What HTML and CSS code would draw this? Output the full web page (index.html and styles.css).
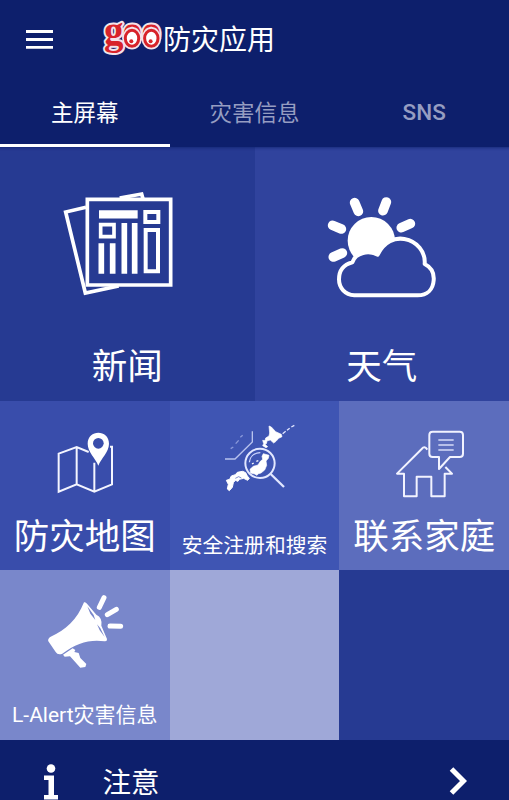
FILE: index.html
```html
<!DOCTYPE html>
<html lang="zh-CN">
<head>
<meta charset="utf-8">
<title>goo防灾应用</title>
<link rel="stylesheet" href="styles.css">
</head>
<body>
<header class="bar">
  <svg class="menu" viewBox="0 0 27 19"><path d="M0 1.5H27M0 9.5H27M0 17.3H27" stroke="#fff" stroke-width="2.8"/></svg>
  <svg class="logo" viewBox="0 0 70 44">
    <text x="6 24.5 43.5" y="27.5">goo</text>
    <g class="halo"><ellipse cx="34" cy="22.3" rx="9.8" ry="11.2"/><ellipse cx="53.3" cy="22.3" rx="9.8" ry="11.2"/></g>
    <g class="eye"><ellipse cx="34" cy="22.3" rx="6.7" ry="8"/><ellipse cx="53.3" cy="22.3" rx="6.7" ry="8"/></g>
    <circle cx="33.3" cy="25.2" r="2" fill="#d8232a"/><circle cx="52.6" cy="25.2" r="2" fill="#d8232a"/>
  </svg>
  <h1>防灾应用</h1>
</header>
<nav class="tabs">
  <a class="tab active">主屏幕</a><a class="tab">灾害信息</a><a class="tab">SNS</a>
</nav>
<main class="grid">
  <section class="tile large news">
    <svg viewBox="0 0 420 390" width="140" height="130" fill="none" stroke="#fff" stroke-width="11">
      <path d="M108 82L47 96L106 339L206 318M209 54L275 42L279 56"/>
      <path d="M112 58H362V315H112Z"/>
      <path d="M147 103H263" stroke-width="25"/>
      <path d="M152 134H192V170H152Z"/>
      <path d="M154 190V281M188 190V281M223 129V281M254 129V281" stroke-width="17"/>
      <path d="M286 96H325V126H286ZM287 150H324V274H287Z" stroke-width="12"/>
    </svg>
    <span class="label">新闻</span>
  </section>
  <section class="tile large weather">
    <svg viewBox="0 0 420 390" width="140" height="130">
      <circle cx="184" cy="182" r="71" fill="#fff"/>
      <path d="M134 68L145 94M229 66L219 92M68 136L94 147M274 143L301 131M70 231L97 219" stroke="#fff" stroke-width="29" stroke-linecap="round"/>
      <path d="M133 346C105 344 87 324 87 298C87 270 103 253 127 247C137 216 177 211 203 224C222 184 255 172 283 177C321 184 347 215 344 252C364 262 373 278 371 301C369 329 351 346 323 346Z" fill="#30439d" stroke="#fff" stroke-width="12" stroke-linejoin="round"/>
    </svg>
    <span class="label">天气</span>
  </section>
  <section class="tile map">
    <svg viewBox="0 0 270 240" width="90" height="80" fill="none" stroke="#f4f5ff" stroke-width="6">
      <path d="M146 96L110 81L56 101V215L110 193L163 215L216 193V80H210M110 81V193M163 128V215"/>
      <path d="M175 137C167 115 143 96 143 71C143 27 207 27 207 71C207 96 183 115 175 137Z" fill="#fff" stroke="none"/>
      <circle cx="175" cy="70" r="16" fill="#394dab" stroke="none"/>
    </svg>
    <span class="label">防灾地图</span>
  </section>
  <section class="tile search">
    <svg viewBox="0 0 300 255" width="100" height="85" fill="#fff">
      <path d="M45 132H75L127 81V49" fill="none" stroke="#b9c3ee" stroke-width="4"/>
      <path d="M62 101L70 96M77 86L86 76M91 67L98 61" fill="none" stroke="#8b99da" stroke-width="4"/>
      <path d="M177 33L184 36L197 50L214 58L216 65L206 70L198 79L191 84L181 75L172 77L170 81L165 77L167 69L177 63L179 54ZM158 76L166 77L171 84L165 88L173 95L168 98L158 92L161 86Z" stroke="#fff" stroke-width="2"/>
      <path d="M218 56L227 49M231 46L239 40M244 36L253 31" stroke="#e0e5ff" stroke-width="4"/>
      <path d="M160 116L177 121L175 130L168 138L170 151L164 165L153 174L145 176L141 181L134 177L122 174L120 163L130 154L144 150L151 139L158 133L156 124Z" stroke="#fff" stroke-width="2"/>
      <path d="M126 147L131 144M139 139L145 137" stroke="#fff" stroke-width="4"/>
      <path d="M49 196L59 193L64 183L76 179L82 172L98 169L107 173L112 183L118 190L113 196L101 190L88 193L84 199L76 196L70 203L67 217L58 227L52 222L55 208Z" stroke="#fff" stroke-width="3"/>
      <path d="M76 190L86 185L94 189" fill="none" stroke="#3f55b3" stroke-width="2"/>
      <circle cx="150" cy="145" r="44" fill="none" stroke="#e2e7ff" stroke-width="6"/>
      <path d="M118 142C119 126 131 114 151 113" fill="none" stroke="#d0d8ff" stroke-width="4"/>
      <path d="M182 177L222 216" stroke="#e2e7ff" stroke-width="7"/>
    </svg>
    <span class="label small">安全注册和搜索</span>
  </section>
  <section class="tile family">
    <svg viewBox="0 0 270 255" width="90" height="85" fill="none" stroke="#f2f3ff" stroke-width="6" stroke-linejoin="round">
      <path d="M127 89C121 80 116 80 110 87L36 161H57V229H95V170H139V229H179V161H201L181 141"/>
      <path d="M143 35H224Q234 35 234 45V101Q234 111 224 111H195L162 147V111H143Q133 111 133 101V45Q133 35 143 35Z"/>
      <path d="M160 60H206M160 75H206M160 90H206" stroke="#d5daf7" stroke-width="5"/>
    </svg>
    <span class="label">联系家庭</span>
  </section>
  <section class="tile alert">
    <svg viewBox="0 0 300 285" width="100" height="95" fill="#fff">
      <path d="M147 67Q152 65 156 71L184 104Q203 113 199 137L216 177Q217 185 209 184C164 177 124 190 82 221Q68 226 62 216L40 184Q37 176 47 170C91 151 127 118 147 67Z"/>
      <path d="M157 79L176 105L181 120L166 101ZM186 133L196 145L209 171L194 151Z" fill="#7987cb"/>
      <path d="M84 224L113 205L121 210L118 216L131 219L136 234L154 252L151 261L136 263L105 229L89 230Z"/>
      <path d="M193 82L207 53M217 104L244 88M225 138L257 139" stroke="#fff" stroke-width="15" stroke-linecap="round"/>
    </svg>
    <span class="label small latin">L-Alert灾害信息</span>
  </section>
  <section class="tile blank"></section>
  <section class="tile dark"></section>
</main>
<footer class="notice">
  <svg class="info" viewBox="0 0 14 36" fill="#fff"><circle cx="7" cy="4.5" r="4.3"/><path d="M0 11.5H10V31H14V35.5H0V31H4.5V16H0Z"/></svg>
  <span>注意</span>
  <svg class="chevron" viewBox="0 0 18 28"><path d="M2.5 2L14.5 14L2.5 26" fill="none" stroke="#fff" stroke-width="5"/></svg>
</footer>
</body>
</html>
```
FILE: styles.css
```css
* { box-sizing: border-box; }
body {
  margin: 0;
  width: 509px;
  height: 800px;
  overflow: hidden;
  background: #0d1f6c;
  color: #fff;
  font-family: Roboto, "Noto Sans CJK SC", sans-serif;
}
svg { display: block; flex: none; }
.bar { height: 78px; display: flex; align-items: center; padding-left: 26px; }
.menu { width: 27px; height: 19px; }
.logo { width: 70px; height: 44px; margin: -2px 0 0 45px; overflow: visible; }
.logo text {
  font-family: "Liberation Serif", serif;
  font-weight: 700;
  font-size: 39px;
  fill: #d8232a;
  stroke: #f3e3ea;
  stroke-width: 4px;
  stroke-linejoin: round;
  paint-order: stroke;
}
.halo { fill: #f3e3ea; }
.eye { fill: #fff; stroke: #d8232a; stroke-width: 3px; }
h1 { margin: 4px 0 0 -5px; font-size: 28px; line-height: 40px; font-weight: 400; }
.tabs { display: grid; grid-template-columns: repeat(3, 1fr); height: 68.5px; }
.tab {
  display: flex;
  align-items: center;
  justify-content: center;
  border-bottom: 3px solid transparent;
  font-size: 22.5px;
  font-weight: 400;
  color: #969dc1;
}
.tab:last-child { font-weight: 500; padding-top: 2px; }
.tab.active { color: #fff; border-color: #fff; }
.grid {
  display: grid;
  grid-template-columns: repeat(6, 1fr);
  grid-template-rows: 254px 169.5px 169.5px;
}
.tile { grid-column: span 2; display: flex; flex-direction: column; min-width: 0; }
.large { grid-column: span 3; box-shadow: inset 0 4px 3px -3px #0d1f6caa; }
.label {
  margin-top: auto;
  align-self: center;
  font-size: 35.5px;
  line-height: 40px;
  white-space: nowrap;
}
.label.small { font-size: 20.8px; line-height: 28px; }
.label.latin { font-size: 21px; }
.news { background: #263a92; padding: 33.5px 0 13.5px; }
.news svg { margin-left: 50px; }
.weather { background: #30439d; padding: 33.5px 0 13.5px; }
.weather svg { margin-left: 55.5px; }
.map { background: #394dab; padding: 19.5px 0 13.5px; }
.map svg { margin-left: 40px; }
.search { background: #3f55b3; padding: 14.5px 0 10.5px; }
.search svg { margin-left: 40.3px; }
.family { background: #5c6dbd; padding: 19.5px 0 13.5px; }
.family svg { margin-left: 45.7px; }
.alert { background: #7987cb; padding: 10px 0 10.5px; }
.alert svg { margin-left: 35px; }
.blank { background: #9fa8d8; }
.dark { background: #263a92; }
.notice { height: 60.5px; display: flex; align-items: flex-start; padding: 24.5px 42px 0 44px; }
.info { width: 14px; height: 36px; }
.notice span { margin: 2px 0 0 44.5px; font-size: 28.5px; line-height: 36px; }
.chevron { width: 18px; height: 28px; margin: 3px 0 0 auto; }
```
